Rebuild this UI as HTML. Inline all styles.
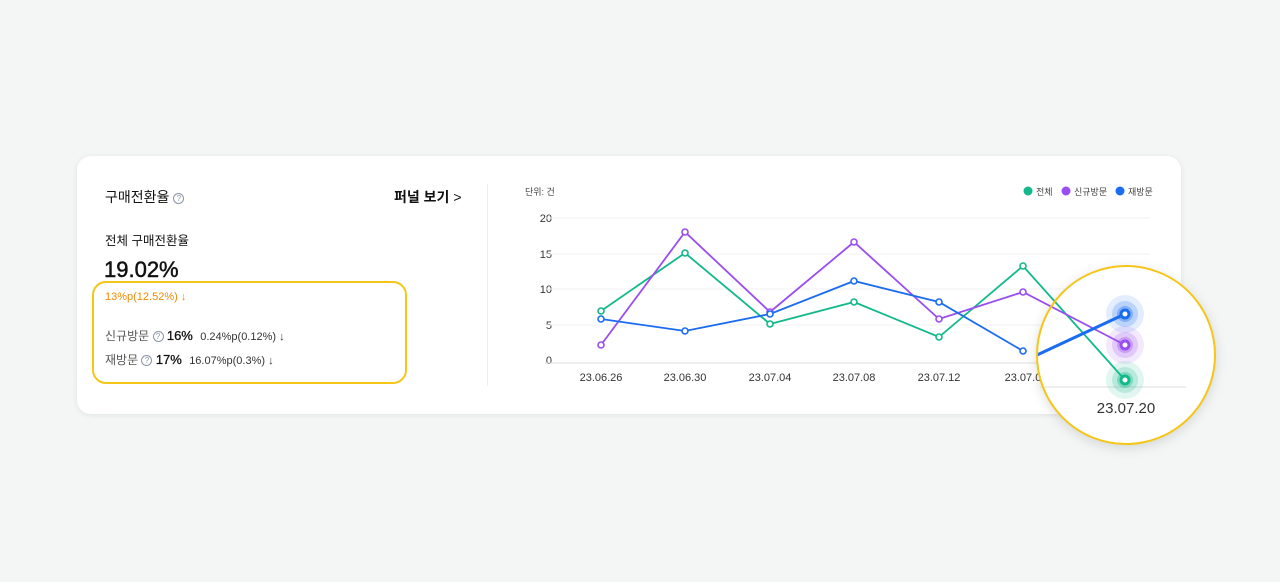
<!DOCTYPE html>
<html><head><meta charset="utf-8"><style>
*{margin:0;padding:0;box-sizing:border-box}
body{width:1280px;height:582px;background:#f3f6f5;font-family:"Liberation Sans","Noto Sans CJK KR",sans-serif;position:relative;overflow:hidden;color:#111}
.card{position:absolute;left:77px;top:156px;width:1104px;height:258px;background:#fff;border-radius:14px;box-shadow:0 1px 6px rgba(0,0,0,.08)}
.t{position:absolute;white-space:nowrap}
.q{display:inline-block;width:11px;height:11px;border:1px solid #8a94a6;border-radius:50%;font-size:8px;line-height:9px;text-align:center;color:#8a94a6;vertical-align:1px}
.hl{position:absolute;left:92px;top:281px;width:315px;height:103px;border:2px solid #f5c518;border-radius:14px}
</style></head><body>
<div class="card"></div>
<div class="t" style="left:105px;top:187px;font-size:14px;">구매전환율 <span class="q">?</span></div>
<div class="t" style="left:394px;top:187px;font-size:14px;font-weight:bold;">퍼널 보기 <span style="font-weight:normal">&gt;</span></div>
<div class="t" style="left:105px;top:230px;font-size:12.5px;">전체 구매전환율</div>
<div class="t" style="left:104px;top:257px;font-size:22px;-webkit-text-stroke:0.5px #111;">19.02%</div>
<div class="hl"></div>
<div class="t" style="left:105px;top:291px;font-size:11px;color:#f08a00;">13%p(12.52%) ↓</div>
<div class="t" style="left:105px;top:327px;font-size:12px;color:#555;">신규방문 <span class="q">?</span> <span style="color:#111;font-size:13px;-webkit-text-stroke:0.3px #111">16%</span> <span style="font-size:11px;color:#333;margin-left:4px">0.24%p(0.12%) ↓</span></div>
<div class="t" style="left:105px;top:351px;font-size:12px;color:#555;">재방문 <span class="q">?</span> <span style="color:#111;font-size:13px;-webkit-text-stroke:0.3px #111">17%</span> <span style="font-size:11px;color:#333;margin-left:4px">16.07%p(0.3%) ↓</span></div>
<div style="position:absolute;left:487px;top:184px;width:1px;height:202px;background:#eee"></div>
<svg width="1280" height="582" style="position:absolute;left:0;top:0" font-family="Liberation Sans, Noto Sans CJK KR, sans-serif">
<defs>
<filter id="sh" x="-20%" y="-20%" width="140%" height="140%"><feDropShadow dx="0" dy="3" stdDeviation="6" flood-opacity=".15"/></filter>
</defs>
<text x="525" y="195" font-size="9" fill="#444">단위: 건</text>
<circle cx="1028" cy="191" r="4.5" fill="#12b98a"/><text x="1036" y="195" font-size="9" fill="#444">전체</text>
<circle cx="1066" cy="191" r="4.5" fill="#9a4df0"/><text x="1074" y="195" font-size="9" fill="#444">신규방문</text>
<circle cx="1120" cy="191" r="4.5" fill="#1a6cf0"/><text x="1128" y="195" font-size="9" fill="#444">재방문</text>
<g font-size="11" fill="#333" text-anchor="end">
<text x="552" y="222">20</text><text x="552" y="258">15</text><text x="552" y="293">10</text><text x="552" y="329">5</text><text x="552" y="364">0</text></g>
<g stroke="#f2f2f2"><line x1="545" x2="1150" y1="218" y2="218"/><line x1="545" x2="1150" y1="254" y2="254"/><line x1="545" x2="1150" y1="289" y2="289"/><line x1="545" x2="1150" y1="325" y2="325"/></g>
<line x1="545" x2="1150" y1="363" y2="363" stroke="#ddd"/>
<g font-size="11" fill="#333" text-anchor="middle">
<text x="601" y="381">23.06.26</text><text x="685" y="381">23.06.30</text><text x="770" y="381">23.07.04</text><text x="854" y="381">23.07.08</text><text x="939" y="381">23.07.12</text><text x="1023" y="381">23.07.0</text></g>
<circle cx="1126" cy="355" r="89" fill="#fff" filter="url(#sh)"/>
<line x1="1040" x2="1186" y1="387" y2="387" stroke="#ddd"/>
<text x="1126" y="413" font-size="15" fill="#333" text-anchor="middle">23.07.20</text>
<g fill="#1a6cf0"><circle cx="1125" cy="314" r="19" opacity=".12"/><circle cx="1125" cy="314" r="13" opacity=".2"/><circle cx="1125" cy="314" r="8" opacity=".35"/></g>
<g fill="#9a4df0"><circle cx="1125" cy="345" r="19" opacity=".12"/><circle cx="1125" cy="345" r="13" opacity=".2"/><circle cx="1125" cy="345" r="8" opacity=".35"/></g>
<g fill="#12b98a"><circle cx="1125" cy="380" r="19" opacity=".12"/><circle cx="1125" cy="380" r="13" opacity=".2"/><circle cx="1125" cy="380" r="8" opacity=".35"/></g>
<g fill="none" stroke-width="1.8">
<polyline stroke="#12b98a" points="601,311 685,253 770,324 854,302 939,337 1023,266 1125,380"/>
<polyline stroke="#9a4df0" points="601,345 685,232 770,312 854,242 939,319 1023,292 1125,345"/>
<polyline stroke="#1a6cf0" points="601,319 685,331 770,314 854,281 939,302 1023,351"/>
<line x1="1037" y1="355" x2="1125" y2="314" stroke="#1a6cf0" stroke-width="3"/>
</g>
<g fill="#fff" stroke-width="1.6">
<g stroke="#12b98a"><circle cx="601" cy="311" r="3"/><circle cx="685" cy="253" r="3"/><circle cx="770" cy="324" r="3"/><circle cx="854" cy="302" r="3"/><circle cx="939" cy="337" r="3"/><circle cx="1023" cy="266" r="3"/></g>
<g stroke="#9a4df0"><circle cx="601" cy="345" r="3"/><circle cx="685" cy="232" r="3"/><circle cx="770" cy="312" r="3"/><circle cx="854" cy="242" r="3"/><circle cx="939" cy="319" r="3"/><circle cx="1023" cy="292" r="3"/></g>
<g stroke="#1a6cf0"><circle cx="601" cy="319" r="3"/><circle cx="685" cy="331" r="3"/><circle cx="770" cy="314" r="3"/><circle cx="854" cy="281" r="3"/><circle cx="939" cy="302" r="3"/><circle cx="1023" cy="351" r="3"/></g>
</g>
<g fill="#fff" stroke-width="3"><circle cx="1125" cy="314" r="4" stroke="#1a6cf0"/><circle cx="1125" cy="345" r="4" stroke="#9a4df0"/><circle cx="1125" cy="380" r="4" stroke="#12b98a"/></g>
<circle cx="1126" cy="355" r="89" fill="none" stroke="#f5c518" stroke-width="2"/>
</svg>
</body></html>
